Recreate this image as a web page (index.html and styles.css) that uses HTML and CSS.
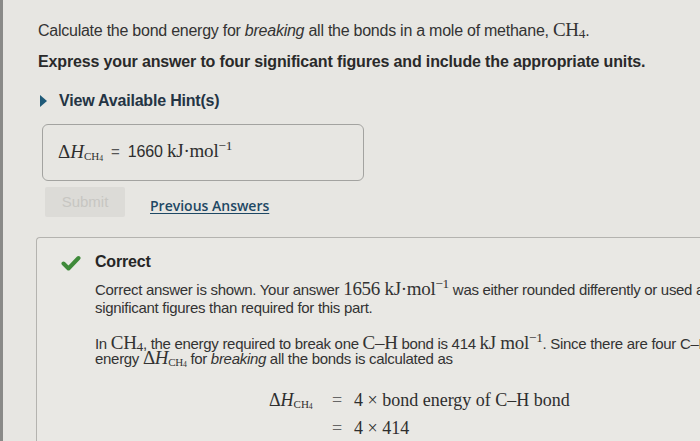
FILE: index.html
```html
<!DOCTYPE html>
<html>
<head>
<meta charset="utf-8">
<link rel="stylesheet" href="styles.css">
</head>
<body>
<div class="edge"></div>
<main class="page">
  <p class="q">Calculate the bond energy for <i>breaking</i> all the bonds in a mole of methane, <span class="m">CH<sub>4</sub></span>.</p>
  <p class="instr">Express your answer to four significant figures and include the appropriate units.</p>
  <div class="hint"><span class="tri"></span><span>View Available Hint(s)</span></div>
  <div class="answer">
    <span class="m big">Δ<i>H</i><sub class="s">CH<sub>4</sub></sub></span>
    <span class="eq">=</span>
    <span class="val">1660 <span class="m big">kJ·mol<sup>−1</sup></span></span>
  </div>
  <div class="actions">
    <button class="submit">Submit</button>
    <a class="prev">Previous Answers</a>
  </div>
  <section class="feedback">
    <div class="fhead">
      <svg class="check" width="20" height="16" viewBox="0 0 20 16"><path d="M2.5 8.5 L7.5 13.5 L17.5 3" fill="none" stroke="#3f8a3a" stroke-width="4" stroke-linecap="round" stroke-linejoin="round"/></svg>
      <span class="ctitle">Correct</span>
    </div>
    <div class="fbody">
      <p class="p1">Correct answer is shown. Your answer <span class="m big">1656 kJ·mol<sup>−1</sup></span> was either rounded differently or used a different number of<br>significant figures than required for this part.</p>
      <p class="p2">In <span class="m big">CH<sub>4</sub></span>, the energy required to break one <span class="m big">C–H</span> bond is 414 <span class="m big">kJ mol<sup>−1</sup></span>. Since there are four C–H bonds in methane, the<br>energy <span class="m big">Δ<i>H</i><sub class="s">CH<sub>4</sub></sub></span> for <i>breaking</i> all the bonds is calculated as</p>
      <div class="calc">
        <div class="row"><span class="lhs">Δ<i>H</i><sub class="s">CH<sub>4</sub></sub></span><span class="ceq">=</span><span class="rhs">4 × bond energy of C–H bond</span></div>
        <div class="row"><span class="lhs"></span><span class="ceq">=</span><span class="rhs">4 × 414</span></div>
      </div>
    </div>
  </section>
</main>
</body>
</html>
```
FILE: styles.css
```css
html, body {
  margin: 0;
  padding: 0;
}
body {
  width: 700px;
  height: 441px;
  overflow: hidden;
  background: #e7e6e2;
  font-family: "Liberation Sans", Arial, sans-serif;
  color: #2e2e2e;
  position: relative;
}
.edge {
  position: absolute;
  left: 0;
  top: 0;
  width: 3px;
  height: 441px;
  background: #8a8a88;
}
.page {
  padding: 18px 0 0 38px;
  display: flex;
  flex-direction: column;
  white-space: nowrap;
}
p { margin: 0; }
.q {
  font-size: 16px;
  line-height: 24px;
  letter-spacing: -0.25px;
  color: #333;
}
.m {
  font-family: "Liberation Serif", "Times New Roman", serif;
}
.q .m { font-size: 19px; }
sub, sup { font-size: 70%; line-height: 0; }
sub { vertical-align: -2px; }
.instr {
  margin-top: 8px;
  font-size: 16px;
  font-weight: bold;
  line-height: 22px;
  letter-spacing: -0.15px;
  color: #2a2a2a;
}
.hint {
  margin-top: 19px;
  display: flex;
  align-items: center;
  gap: 12px;
  font-size: 16px;
  font-weight: bold;
  color: #243444;
  letter-spacing: -0.2px;
  padding-left: 2px;
}
.tri {
  width: 0;
  height: 0;
  border-top: 6px solid transparent;
  border-bottom: 6px solid transparent;
  border-left: 7px solid #1f5a78;
}
.answer {
  margin-top: 14px;
  margin-left: 4px;
  width: 322px;
  height: 57px;
  box-sizing: border-box;
  border: 1.5px solid #a3a3a0;
  border-radius: 6px;
  display: flex;
  align-items: center;
  gap: 8px;
  padding-left: 15px;
  padding-bottom: 3px;
  font-size: 16px;
  color: #2e2e2e;
}
.big { font-size: 19px; line-height: 1; }
.s { font-size: 11px; }
.s sub { font-size: 70%; vertical-align: -1px; }
.eq { font-size: 15px; color: #555; }
.answer .val { letter-spacing: -0.2px; }
.actions {
  margin-top: 6px;
  margin-left: 7px;
  display: flex;
  align-items: center;
  gap: 25px;
}
.submit {
  width: 80px;
  height: 30px;
  border: none;
  border-radius: 2px;
  background: #dcdbd7;
  color: #c7c6c2;
  font-family: "Liberation Sans", Arial, sans-serif;
  font-size: 15px;
  padding: 0 0 1px 0;
}
.prev {
  font-family: "Open Sans", "Liberation Sans", sans-serif;
  font-size: 14px;
  font-weight: 600;
  color: #1e4864;
  text-decoration: underline;
  text-underline-offset: 2px;
  padding-top: 6px;
}
.feedback {
  margin-top: 20px;
  margin-left: -2px;
  border-top: 1.5px solid #b4b3af;
  border-left: 1.5px solid #b4b3af;
  border-radius: 4px 0 0 0;
  background: #e9e8e4;
  padding: 15px 0 0 24px;
  height: 188px;
}
.fhead {
  display: flex;
  align-items: center;
  gap: 14px;
}
.check { margin-top: 1px; }
.ctitle {
  font-size: 16px;
  font-weight: bold;
  color: #262626;
  letter-spacing: -0.2px;
}
.fbody {
  padding-left: 34px;
  font-size: 15px;
  letter-spacing: -0.3px;
  color: #333;
}
.fbody p .big { line-height: 0; }
.p1 {
  margin-top: 10px;
  line-height: 18px;
}
.p2 {
  margin-top: 19px;
  line-height: 15px;
}
.calc {
  margin-top: 24px;
  margin-left: 174px;
  font-family: "Liberation Serif", "Times New Roman", serif;
  font-size: 18px;
  color: #2e2e2e;
  display: flex;
  flex-direction: column;
  gap: 7px;
  letter-spacing: 0;
}
.row {
  display: flex;
  align-items: baseline;
}
.lhs { width: 63px; }
.lhs .s { font-size: 11px; }
.ceq { width: 22px; color: #666; }
```
